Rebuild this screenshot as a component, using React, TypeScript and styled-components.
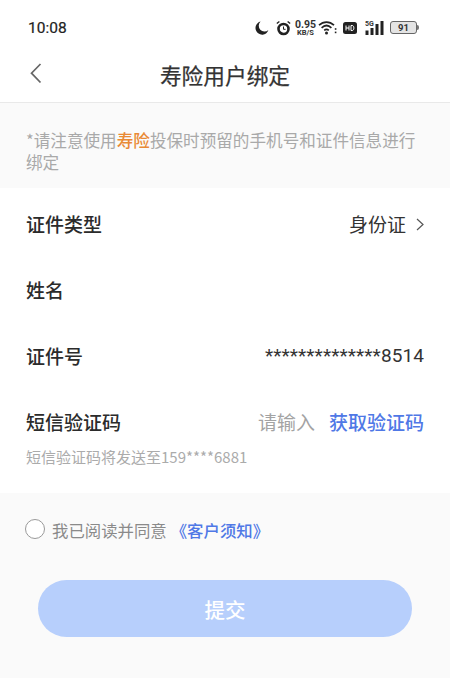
import React from "react";
import styled, { createGlobalStyle } from "styled-components";

const Global = createGlobalStyle`
  html, body { margin: 0; padding: 0; background: #fff; }
  body { font-family: "Noto Sans CJK SC", "Noto Sans", sans-serif; }
  * { box-sizing: border-box; }
`;

const Page = styled.div`
  width: 450px;
  height: 678px;
  display: flex;
  flex-direction: column;
  background: #fff;
  overflow: hidden;
`;

const StatusBar = styled.div`
  height: 52px;
  padding: 3px 33px 0 28px;
  display: flex;
  align-items: center;
  justify-content: space-between;
`;

const Time = styled.span`
  font: 400 15.5px/20px Roboto, sans-serif;
  color: #222;
  -webkit-text-stroke: 0.2px #222;
`;

const StatusIcons = styled.div`
  display: flex;
  align-items: center;
  height: 20px;
`;

const SpeedBox = styled.div`
  display: flex;
  flex-direction: column;
  align-items: center;
  width: 21px;
  margin: 0 2px 0 4px;
  color: #333;
  font-family: Roboto, sans-serif;
`;

const SpeedValue = styled.span`
  font-size: 10.5px;
  line-height: 11px;
  height: 10px;
  font-weight: 700;
`;

const SpeedUnit = styled.span`
  font-size: 7.5px;
  line-height: 8px;
  height: 8px;
  font-weight: 700;
`;

const Battery = styled.div`
  position: relative;
  width: 27px;
  height: 13px;
  margin-left: 6px;
  border: 1px solid #666;
  border-radius: 3px;
  background: #e4e4e4;
  color: #333;
  font: 700 9.5px/11px Roboto, sans-serif;
  text-align: center;
  &::after {
    content: "";
    position: absolute;
    right: -3px;
    top: 3px;
    width: 2px;
    height: 5px;
    border-radius: 0 2px 2px 0;
    background: #777;
  }
`;

const NavBar = styled.header`
  height: 51px;
  padding-bottom: 4px;
  display: flex;
  align-items: center;
  justify-content: center;
  position: relative;
  border-bottom: 1px solid #e9e9e9;
`;

const BackButton = styled.span`
  position: absolute;
  left: 29px;
  top: 9px;
  display: flex;
`;

const Title = styled.h1`
  margin: 0;
  font-size: 21.7px;
  line-height: 28px;
  font-weight: 400;
  -webkit-text-stroke: 0.25px #333;
  color: #333;
`;

const Notice = styled.p`
  margin: 0;
  height: 85px;
  padding: 26px 26px 0;
  background: #fafafa;
  color: #a9a9a9;
  font-size: 16.6px;
  line-height: 22px;
`;

const Highlight = styled.span`
  color: #e98a35;
  font-weight: 500;
`;

const Form = styled.section`
  height: 305px;
  padding-top: 3px;
`;

const Row = styled.div`
  height: 66px;
  padding: 0 26px;
  display: flex;
  align-items: center;
  justify-content: space-between;
`;

const Label = styled.span`
  font-size: 19px;
  line-height: 26px;
  font-weight: 500;
  color: #2b2b2b;
`;

const Value = styled.span`
  display: flex;
  align-items: center;
  gap: 10px;
  font-size: 19px;
  line-height: 26px;
  color: #333;
`;

const IdValue = styled.span`
  font: 400 19px/26px Roboto, sans-serif;
  letter-spacing: 0.1px;
  color: #333;
`;

const CodeGroup = styled.span`
  display: flex;
  align-items: center;
  gap: 14px;
  font-size: 19px;
  line-height: 26px;
`;

const Placeholder = styled.span`
  color: #a3a3a3;
`;

const CodeLink = styled.span`
  color: #4f78e6;
  font-weight: 500;
`;

const Hint = styled.p`
  margin: -8px 26px 0;
  color: #ababab;
  font-size: 15px;
  line-height: 20px;
`;

const Footer = styled.footer`
  flex: 1;
  padding: 26px 38px 0;
  background: #fafafa;
`;

const Agreement = styled.label`
  display: flex;
  align-items: center;
  gap: 7px;
  margin-left: -13px;
  height: 22px;
  font-size: 16.4px;
  line-height: 22px;
  color: #8a8a8a;
`;

const Radio = styled.span`
  width: 20px;
  height: 20px;
  margin-top: -2px;
  border: 1.5px solid #999;
  border-radius: 50%;
  background: #fff;
`;

const TermsLink = styled.span`
  margin-left: 4px;
  color: #4f78e6;
  font-weight: 500;
`;

const Submit = styled.button`
  display: block;
  width: 374px;
  height: 57px;
  margin-top: 39px;
  border: 0;
  border-radius: 29px;
  background: #b7cffc;
  color: #fff;
  font-family: inherit;
  font-size: 20.5px;
  font-weight: 500;
`;

export default function App() {
  return (
    <Page>
      <Global />
      <StatusBar>
        <Time>10:08</Time>
        <StatusIcons>
          <svg width="14" height="14" viewBox="0 0 14 14" style={{ marginRight: 7 }}>
            <path d="M5.6.6A6.6 6.6 0 1 0 13.4 9 5.6 5.6 0 0 1 5.6.6Z" fill="#222" />
          </svg>
          <svg width="15" height="16" viewBox="0 0 15 16">
            <circle cx="7.5" cy="9" r="5" fill="none" stroke="#222" strokeWidth="2.6" />
            <path d="M7.5 6.5V9.3H9.6" fill="none" stroke="#222" strokeWidth="1" />
            <path d="M.8 3.6 3.4 1.4M14.2 3.6 11.6 1.4" stroke="#222" strokeWidth="1.3" />
          </svg>
          <SpeedBox>
            <SpeedValue>0.95</SpeedValue>
            <SpeedUnit>KB/S</SpeedUnit>
          </SpeedBox>
          <svg width="19" height="15" viewBox="0 0 19 15">
            <path d="M1 5.2C5.5 1 11.5 1 16 5.2M3.6 7.8C6.6 5 10.4 5 13.4 7.8M6.2 10.4C7.6 9.2 9.4 9.2 10.8 10.4" fill="none" stroke="#222" strokeWidth="1.7" />
            <circle cx="8.5" cy="13" r="1.5" fill="#222" />
            <rect x="16.8" y="8.2" width="1.6" height="1.6" fill="#222" />
            <rect x="16.8" y="11.6" width="1.6" height="1.6" fill="#222" />
          </svg>
          <svg width="14" height="12" viewBox="0 0 14 12" style={{ marginLeft: 6 }}>
            <rect width="14" height="12" rx="2.5" fill="#222" />
            <path d="M3 3.5V8.5M6 3.5V8.5M3 6H6" stroke="#fff" strokeWidth="1" fill="none" />
            <path d="M8 3.5V8.5H9.3C11.4 8.5 11.4 3.5 9.3 3.5Z" stroke="#fff" strokeWidth="1" fill="none" />
          </svg>
          <svg width="19" height="16" viewBox="0 0 19 16" style={{ marginLeft: 8 }}>
            <text x="0" y="6" fontFamily="Roboto, sans-serif" fontSize="7" fontWeight="700" fill="#333">5G</text>
            <rect x="0.5" y="10.5" width="3" height="4.5" fill="#222" />
            <rect x="5.5" y="8" width="3" height="7" fill="#222" />
            <rect x="10.5" y="4" width="3" height="11" fill="#222" />
            <rect x="15.5" y="1" width="3" height="14" fill="#222" />
          </svg>
          <Battery>91</Battery>
        </StatusIcons>
      </StatusBar>
      <NavBar>
        <BackButton>
          <svg width="14" height="24" viewBox="0 0 14 24">
            <path d="M11.5 3 2.5 12.2 11.5 21.5" fill="none" stroke="#666" strokeWidth="1.7" />
          </svg>
        </BackButton>
        <Title>寿险用户绑定</Title>
      </NavBar>
      <Notice>
        *请注意使用<Highlight>寿险</Highlight>投保时预留的手机号和证件信息进行绑定
      </Notice>
      <Form>
        <Row>
          <Label>证件类型</Label>
          <Value>
            身份证
            <svg width="8" height="13" viewBox="0 0 8 13">
              <path d="M1 1 7 6.5 1 12" fill="none" stroke="#555" strokeWidth="1.2" />
            </svg>
          </Value>
        </Row>
        <Row>
          <Label>姓名</Label>
        </Row>
        <Row>
          <Label>证件号</Label>
          <IdValue>**************8514</IdValue>
        </Row>
        <Row>
          <Label>短信验证码</Label>
          <CodeGroup>
            <Placeholder>请输入</Placeholder>
            <CodeLink>获取验证码</CodeLink>
          </CodeGroup>
        </Row>
        <Hint>短信验证码将发送至159****6881</Hint>
      </Form>
      <Footer>
        <Agreement>
          <Radio />
          <span>
            我已阅读并同意<TermsLink>《客户须知》</TermsLink>
          </span>
        </Agreement>
        <Submit>提交</Submit>
      </Footer>
    </Page>
  );
}
